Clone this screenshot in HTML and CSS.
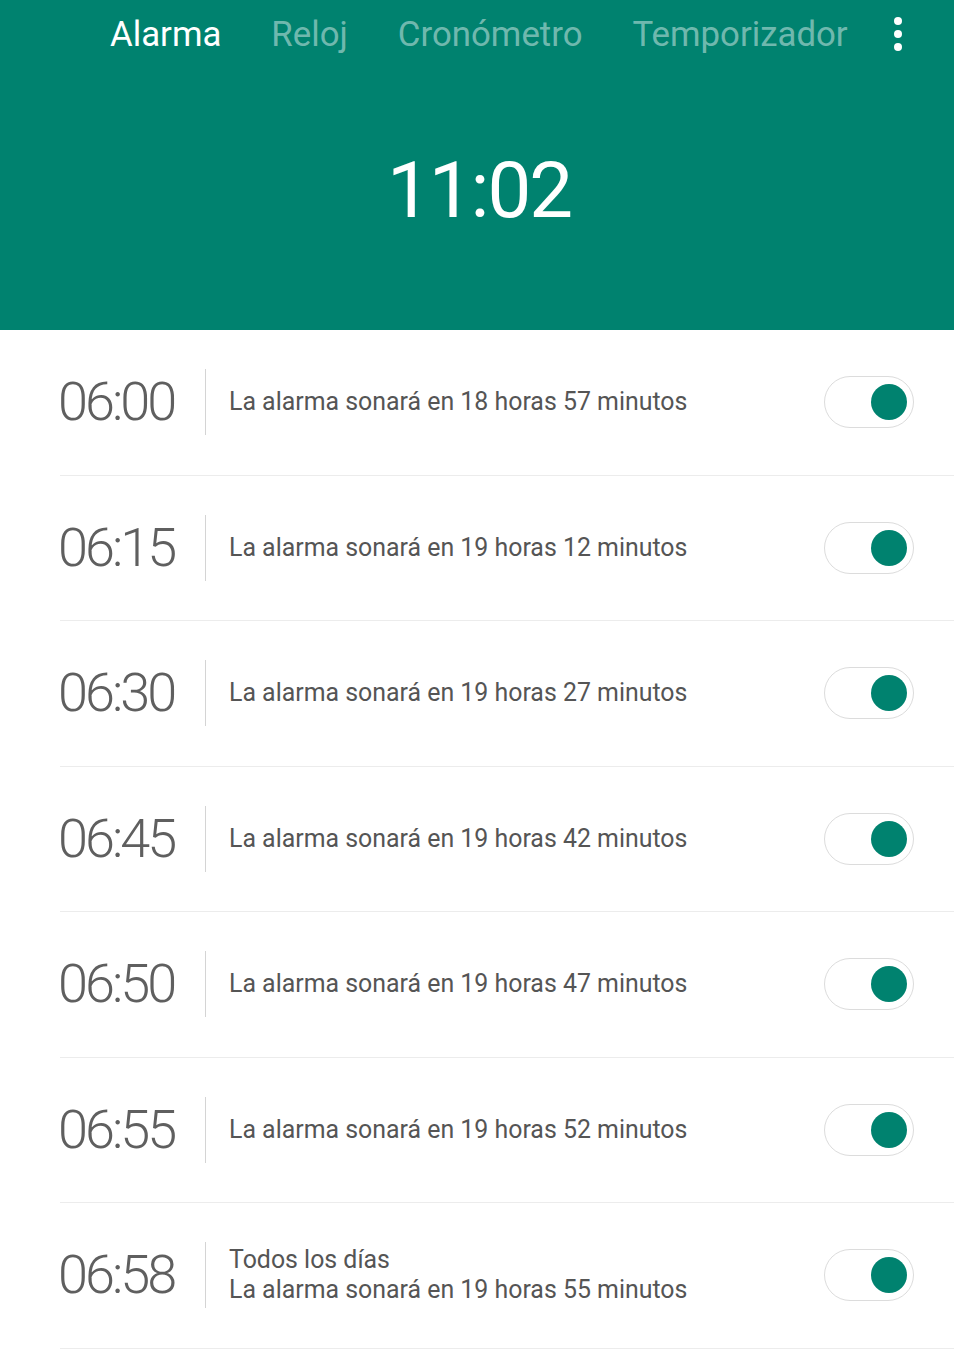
FILE: index.html
```html
<!DOCTYPE html>
<html lang="es">
<head>
  <meta charset="UTF-8">
  <meta name="viewport" content="width=device-width, initial-scale=1.0">
  <title>Alarma</title>
  <link rel="stylesheet" href="styles.css">
</head>
<body>
  <header class="header">
    <nav class="tabs">
      <span class="tab active">Alarma</span>
      <span class="tab">Reloj</span>
      <span class="tab">Cronómetro</span>
      <span class="tab">Temporizador</span>
      <span class="more"><i></i><i></i><i></i></span>
    </nav>
    <div class="clock">11:02</div>
  </header>

  <ul class="alarms">
    <li class="alarm">
      <span class="time">06:00</span>
      <div class="info"><span>La alarma sonará en 18 horas 57 minutos</span></div>
      <span class="switch on"></span>
    </li>
    <li class="alarm">
      <span class="time">06:15</span>
      <div class="info"><span>La alarma sonará en 19 horas 12 minutos</span></div>
      <span class="switch on"></span>
    </li>
    <li class="alarm">
      <span class="time">06:30</span>
      <div class="info"><span>La alarma sonará en 19 horas 27 minutos</span></div>
      <span class="switch on"></span>
    </li>
    <li class="alarm">
      <span class="time">06:45</span>
      <div class="info"><span>La alarma sonará en 19 horas 42 minutos</span></div>
      <span class="switch on"></span>
    </li>
    <li class="alarm">
      <span class="time">06:50</span>
      <div class="info"><span>La alarma sonará en 19 horas 47 minutos</span></div>
      <span class="switch on"></span>
    </li>
    <li class="alarm">
      <span class="time">06:55</span>
      <div class="info"><span>La alarma sonará en 19 horas 52 minutos</span></div>
      <span class="switch on"></span>
    </li>
    <li class="alarm">
      <span class="time">06:58</span>
      <div class="info">
        <span>Todos los días</span>
        <span>La alarma sonará en 19 horas 55 minutos</span>
      </div>
      <span class="switch on"></span>
    </li>
  </ul>
</body>
</html>
```

FILE: styles.css
```css
body {
  margin: 0;
  font-family: Roboto, "Noto Sans", sans-serif;
  background: #fff;
  color: #555;
}

.header {
  background: #00826f;
  height: 330px;
  color: #fff;
}

.tabs {
  display: flex;
  align-items: center;
  height: 68px;
  padding-left: 110px;
  gap: 50px;
}

.tab {
  font-size: 34.8px;
  color: rgba(255, 255, 255, 0.45);
}

.tab.active {
  color: #fff;
}

.more {
  display: flex;
  flex-direction: column;
  gap: 5px;
  margin-left: -4px;
}

.more i {
  width: 8px;
  height: 8px;
  border-radius: 50%;
  background: #fff;
}

.clock {
  text-align: center;
  font-size: 78px;
  line-height: 1;
  margin-top: 84px;
  padding-left: 4px;
  letter-spacing: -2px;
}

.alarms {
  list-style: none;
  margin: 0;
  padding: 0 0 0 60px;
}

.alarm {
  box-sizing: border-box;
  display: flex;
  align-items: center;
  height: 145.5px;
  border-bottom: 1px solid #ececec;
  padding-right: 40px;
}

.time {
  width: 147px;
  font-size: 54px;
  font-weight: 300;
  color: #5f5f5f;
  letter-spacing: -3px;
  line-height: 1;
  margin-left: -2px;
}

.info {
  flex: 1;
  display: flex;
  flex-direction: column;
  justify-content: center;
  height: 66px;
  border-left: 1px solid #d4d4d4;
  padding-left: 23px;
  font-size: 24.9px;
  line-height: 30px;
  color: #555;
}

.switch {
  position: relative;
  width: 88px;
  height: 50px;
  border: 1px solid #dcdcdc;
  border-radius: 26px;
  background: #fff;
}

.switch.on::after {
  content: "";
  position: absolute;
  right: 6px;
  top: 7px;
  width: 36px;
  height: 36px;
  border-radius: 50%;
  background: #00826f;
}
```
